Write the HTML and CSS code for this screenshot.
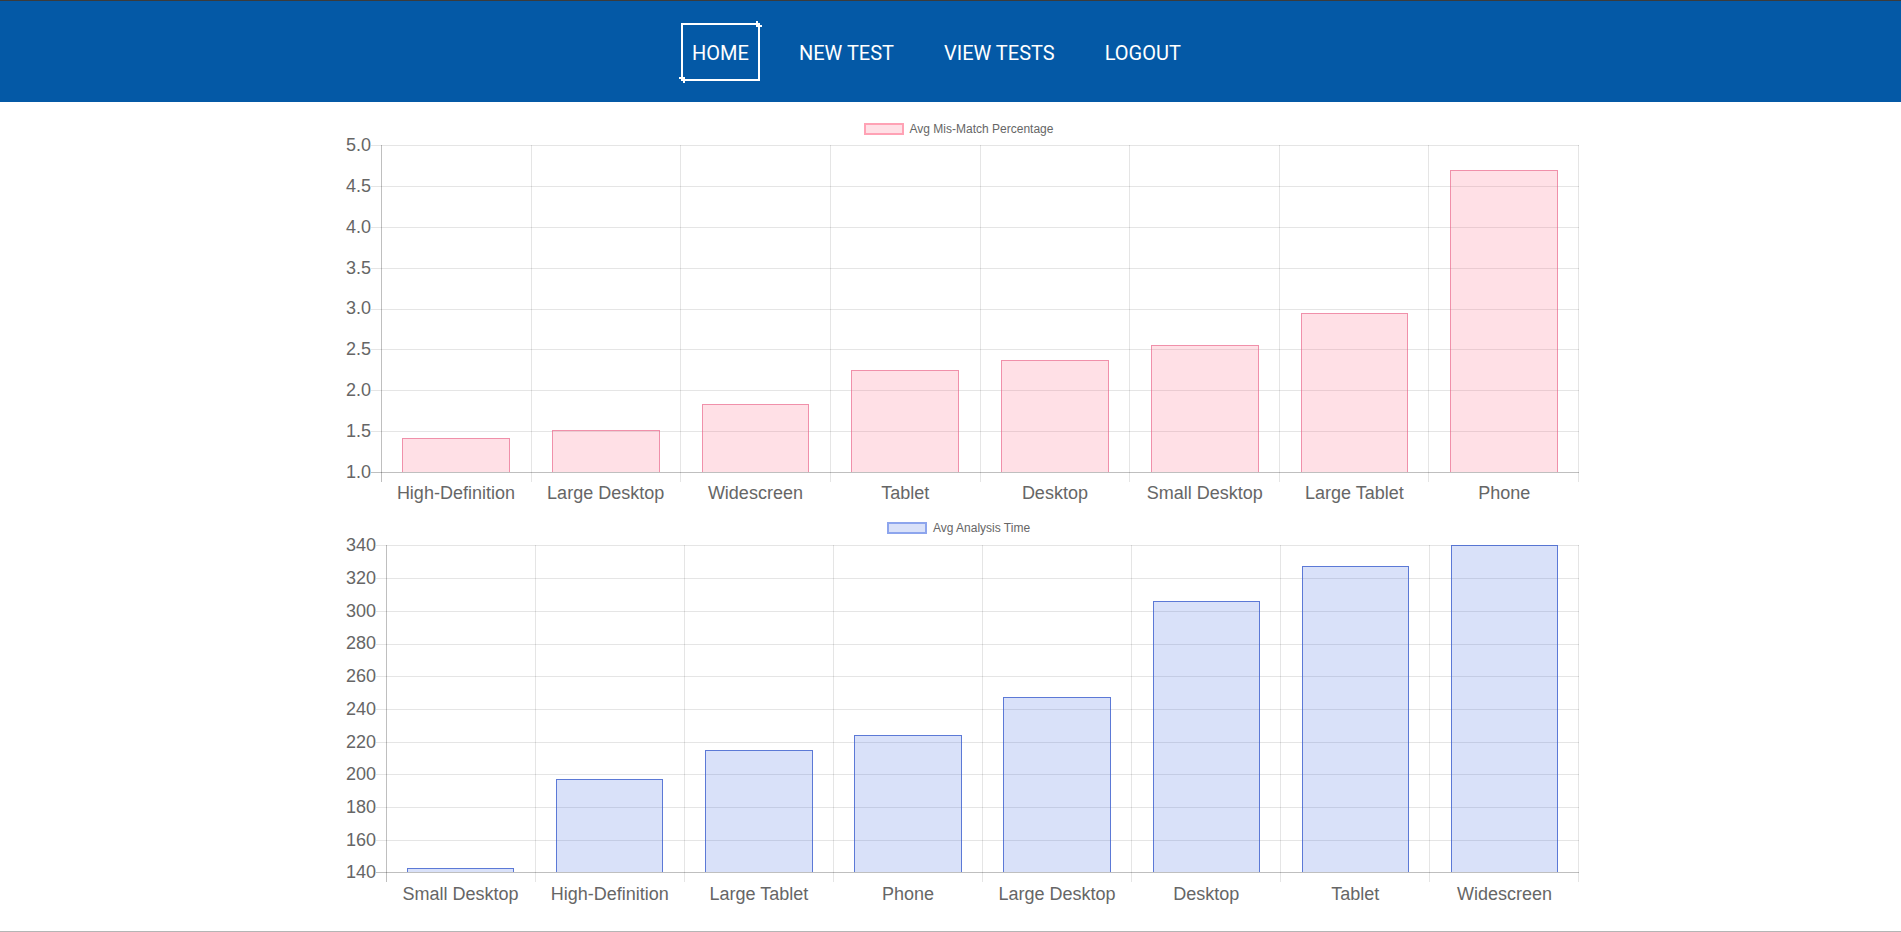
FILE: index.html
```
<!DOCTYPE html>
<html lang="en">
<head>
<meta charset="utf-8">
<title>Dashboard</title>
<link rel="stylesheet" href="styles.css">
</head>
<body>
<nav class="topnav">
  <ul class="menu">
    <li><a class="menu-link active" href="#">HOME</a></li>
    <li><a class="menu-link" href="#">NEW TEST</a></li>
    <li><a class="menu-link" href="#">VIEW TESTS</a></li>
    <li><a class="menu-link" href="#">LOGOUT</a></li>
  </ul>
</nav>
<main class="charts">
  <section class="chart chart-mismatch">
    <div class="legend"><span class="legend-box box-pink"></span><span class="legend-label">Avg Mis-Match Percentage</span></div>
    <div class="chart-grid">
      <div class="y-axis">
        <span class="y-tick">5.0</span><span class="y-tick">4.5</span><span class="y-tick">4.0</span>
        <span class="y-tick">3.5</span><span class="y-tick">3.0</span><span class="y-tick">2.5</span>
        <span class="y-tick">2.0</span><span class="y-tick">1.5</span><span class="y-tick">1.0</span>
      </div>
      <div class="plot">
        <div class="h-lines"><i></i><i></i><i></i><i></i><i></i><i></i><i></i><i></i></div>
        <div class="v-lines"><i></i><i></i><i></i><i></i><i></i><i></i><i></i><i></i></div>
        <div class="bars">
          <div class="cat"><div class="bar bar-pink" style="height:10.4%"></div></div>
          <div class="cat"><div class="bar bar-pink" style="height:12.8%"></div></div>
          <div class="cat"><div class="bar bar-pink" style="height:21%"></div></div>
          <div class="cat"><div class="bar bar-pink" style="height:31.3%"></div></div>
          <div class="cat"><div class="bar bar-pink" style="height:34.3%"></div></div>
          <div class="cat"><div class="bar bar-pink" style="height:39%"></div></div>
          <div class="cat"><div class="bar bar-pink" style="height:48.7%"></div></div>
          <div class="cat"><div class="bar bar-pink" style="height:92.3%"></div></div>
        </div>
      </div>
      <div class="x-axis">
        <span>High-Definition</span><span>Large Desktop</span><span>Widescreen</span><span>Tablet</span>
        <span>Desktop</span><span>Small Desktop</span><span>Large Tablet</span><span>Phone</span>
      </div>
    </div>
  </section>
  <section class="chart chart-time">
    <div class="legend"><span class="legend-box box-blue"></span><span class="legend-label">Avg Analysis Time</span></div>
    <div class="chart-grid">
      <div class="y-axis">
        <span class="y-tick">340</span><span class="y-tick">320</span><span class="y-tick">300</span>
        <span class="y-tick">280</span><span class="y-tick">260</span><span class="y-tick">240</span>
        <span class="y-tick">220</span><span class="y-tick">200</span><span class="y-tick">180</span>
        <span class="y-tick">160</span><span class="y-tick">140</span>
      </div>
      <div class="plot">
        <div class="h-lines"><i></i><i></i><i></i><i></i><i></i><i></i><i></i><i></i><i></i><i></i></div>
        <div class="v-lines"><i></i><i></i><i></i><i></i><i></i><i></i><i></i><i></i></div>
        <div class="bars">
          <div class="cat"><div class="bar bar-blue" style="height:1.2%"></div></div>
          <div class="cat"><div class="bar bar-blue" style="height:28.4%"></div></div>
          <div class="cat"><div class="bar bar-blue" style="height:37.3%"></div></div>
          <div class="cat"><div class="bar bar-blue" style="height:42.1%"></div></div>
          <div class="cat"><div class="bar bar-blue" style="height:53.6%"></div></div>
          <div class="cat"><div class="bar bar-blue" style="height:82.9%"></div></div>
          <div class="cat"><div class="bar bar-blue" style="height:93.7%"></div></div>
          <div class="cat"><div class="bar bar-blue" style="height:100%"></div></div>
        </div>
      </div>
      <div class="x-axis">
        <span>Small Desktop</span><span>High-Definition</span><span>Large Tablet</span><span>Phone</span>
        <span>Large Desktop</span><span>Desktop</span><span>Tablet</span><span>Widescreen</span>
      </div>
    </div>
  </section>
</main>
<div class="page-end"></div>
</body>
</html>
```
FILE: styles.css
```
* {
  box-sizing: border-box;
}

body {
  margin: 0;
  background: #ffffff;
  font-family: "Liberation Sans", Arial, Helvetica, sans-serif;
}

/* ---------- navigation ---------- */
.topnav {
  height: 102px;
  background: #0459a6;
  border-top: 1px solid #3b3b3b;
  display: flex;
  align-items: center;
  justify-content: center;
  padding-right: 28px;
}

.menu {
  list-style: none;
  margin: 0;
  padding: 0;
  display: flex;
  gap: 28px;
}

.menu-link {
  position: relative;
  display: block;
  height: 58px;
  padding: 2px 9px 0;
  line-height: 52px;
  border: 2px solid transparent;
  color: #ffffff;
  text-decoration: none;
  font-family: Roboto, "Noto Sans", sans-serif;
  font-size: 20px;
  white-space: nowrap;
}

.menu-link.active {
  border-color: #ffffff;
}

.menu-link.active::before {
  content: "";
  position: absolute;
  top: -4px;
  right: -4px;
  width: 4px;
  height: 4px;
  border-left: 2px solid #ffffff;
  border-bottom: 2px solid #ffffff;
}

.menu-link.active::after {
  content: "";
  position: absolute;
  left: -4px;
  bottom: -4px;
  width: 4px;
  height: 4px;
  border-right: 2px solid #ffffff;
  border-top: 2px solid #ffffff;
}

/* ---------- charts ---------- */
.charts {
  width: 1233px;
  margin-left: 346px;
}

.legend {
  display: flex;
  justify-content: center;
  align-items: center;
  height: 12px;
  font-size: 12px;
  line-height: 12px;
  color: #666666;
}

.legend-box {
  width: 40px;
  height: 12px;
  margin-right: 6px;
  border: 2px solid;
}

.legend-label {
  padding-right: 8px;
  white-space: nowrap;
}

.box-pink {
  background: rgba(255, 99, 132, 0.2);
  border-color: rgba(255, 99, 132, 0.5);
}

.box-blue {
  background: rgba(65, 105, 225, 0.2);
  border-color: rgba(65, 105, 225, 0.5);
}

.chart-mismatch .legend {
  margin-top: 21px;
  margin-bottom: 9.7px;
}

.chart-time .legend {
  margin-top: 20.7px;
  margin-bottom: 11px;
}

.chart-grid {
  display: grid;
  grid-template-columns: auto 1fr;
}

.y-axis {
  display: flex;
  flex-direction: column;
  justify-content: space-between;
  padding-right: 10px;
  font-size: 18px;
  color: #666666;
}

.y-tick {
  height: 0;
  display: flex;
  align-items: center;
  justify-content: flex-end;
  line-height: 18px;
}

.plot {
  position: relative;
  height: 327.6px;
}

.chart-time .plot {
  height: 326.8px;
}

.h-lines {
  position: absolute;
  top: 0;
  left: -10px;
  right: 0;
  bottom: -1px;
  display: flex;
  flex-direction: column;
  border-bottom: 1px solid rgba(0, 0, 0, 0.25);
}

.h-lines i {
  flex: 1;
  border-top: 1px solid rgba(0, 0, 0, 0.1);
}

.v-lines {
  position: absolute;
  top: 0;
  left: 0;
  right: 0;
  bottom: -10px;
  display: flex;
}

.v-lines i {
  flex: 1;
  border-left: 1px solid rgba(0, 0, 0, 0.1);
}

.v-lines i:first-child {
  border-left-color: rgba(0, 0, 0, 0.25);
}

.v-lines i:last-child {
  border-right: 1px solid rgba(0, 0, 0, 0.1);
}

.bars {
  position: relative;
  display: flex;
  height: 100%;
}

.cat {
  flex: 1;
  display: flex;
  justify-content: center;
  align-items: flex-end;
}

.bar {
  width: 72%;
  border: 1px solid;
  border-bottom: 0;
}

.bar-pink {
  background: rgba(255, 99, 132, 0.2);
  border-color: rgba(230, 90, 130, 0.6);
}

.bar-blue {
  background: rgba(65, 105, 225, 0.2);
  border-color: rgba(60, 95, 205, 0.8);
}

.x-axis {
  grid-column: 2;
  display: flex;
  padding-top: 11.5px;
  font-size: 18px;
  line-height: 18px;
  color: #666666;
}

.chart-time .x-axis {
  padding-top: 12.5px;
}

.x-axis span {
  flex: 1;
  text-align: center;
  white-space: nowrap;
}

.page-end {
  margin-top: 28px;
  border-top: 2px solid #b5b5b5;
}
```
